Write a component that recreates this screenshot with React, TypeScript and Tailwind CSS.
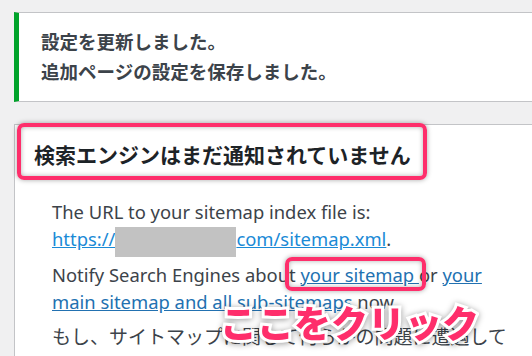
export default function App() {
  return (
    <div className="relative w-[532px] h-[356px] overflow-hidden bg-[#f0f0f1] pt-3 pl-[14px] font-['Noto_Sans','Noto_Sans_CJK_JP',sans-serif]">
      {/* notice */}
      <div className="h-[90px] bg-white border-y border-[#c3c4c7] border-l-[5px] border-l-[#00a32a] pl-[22px] pt-[14px] text-[18.5px] leading-[30px] font-semibold text-[#3c434a]">
        <p>設定を更新しました。</p>
        <p>追加ページの設定を保存しました。</p>
      </div>

      {/* sitemap box */}
      <div className="mt-[22px] h-[300px] bg-white border-t border-l border-[#c3c4c7] pt-[15px] pl-[19px]">
        <h2 className="text-[21px] leading-[30px] font-bold text-[#1d2327] whitespace-nowrap">
          検索エンジンはまだ通知されていません
        </h2>
        <div className="pl-[18px] text-[18.4px] leading-[27px] text-[#3c434a] whitespace-nowrap">
          <p className="mt-[28px]">
            The URL to your sitemap index file is:
            <br />
            <a className="underline text-[#1a8ad6]">
              https://
              <span className="relative inline-block w-[121px]">
                <span className="absolute left-0 -top-[19px] w-full h-[30px] bg-[#c2c2c2]" />
              </span>
              com/sitemap.xml
            </a>
            .
          </p>
          <p className="mt-[9px]">
            Notify Search Engines about <a className="underline text-[#2271b1]">your sitemap </a> or{" "}
            <a className="underline text-[#2271b1]">your</a>
            <br />
            <a className="underline text-[#2271b1]">main sitemap and all sub-sitemaps</a> now.
          </p>
          <p className="mt-[9px] text-[19px]">もし、サイトマップに関して何らかの問題に遭遇して</p>
        </div>
      </div>

      {/* annotations */}
      <div className="absolute left-[17px] top-[123px] w-[410px] h-[57px] rounded-[7px] border-4 border-[#fe2e6b] shadow-[0_0_5px_rgba(0,0,0,0.35),inset_0_0_5px_rgba(0,0,0,0.3)]" />
      <div className="absolute left-[285px] top-[257px] w-[141px] h-[34px] rounded-[7px] border-4 border-[#fe2e6b] shadow-[0_0_5px_rgba(0,0,0,0.35),inset_0_0_5px_rgba(0,0,0,0.3)]" />
      <div className="absolute left-[220px] top-[300px] text-[37px] leading-[48px] font-black text-[#fe2e6b] whitespace-nowrap [-webkit-text-stroke:6px_#fff] [paint-order:stroke_fill] drop-shadow-[0_1px_3px_rgba(0,0,0,0.4)]">
        ここをクリック
      </div>
    </div>
  );
}
